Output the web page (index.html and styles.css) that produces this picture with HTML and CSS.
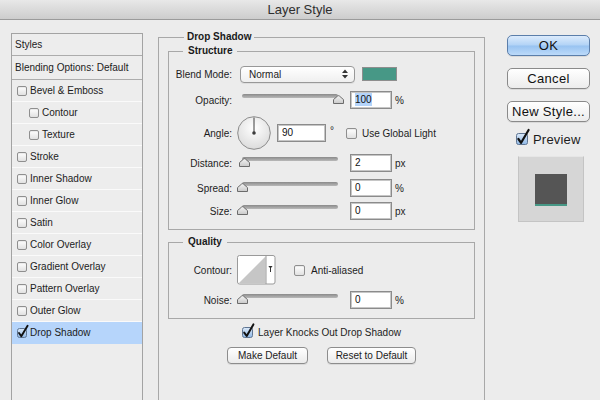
FILE: index.html
```html
<!DOCTYPE html>
<html>
<head>
<meta charset="utf-8">
<title>Layer Style</title>
<link rel="stylesheet" href="styles.css">
</head>
<body>
<svg class="defs" width="0" height="0" aria-hidden="true">
  <defs>
    <linearGradient id="gThumb" x1="0" y1="0" x2="0" y2="1">
      <stop offset="0" stop-color="#f4f4f4"/>
      <stop offset="1" stop-color="#c9c9c9"/>
    </linearGradient>
    <linearGradient id="gCheck" x1="0" y1="0" x2="0" y2="1">
      <stop offset="0" stop-color="#dbe9f8"/>
      <stop offset="1" stop-color="#8fb8e6"/>
    </linearGradient>
    <radialGradient id="gDial" cx="0.5" cy="0.35" r="0.7">
      <stop offset="0" stop-color="#ffffff"/>
      <stop offset="1" stop-color="#d9d9d9"/>
    </radialGradient>
  </defs>
</svg>

<div class="titlebar">Layer Style</div>

<div class="body">
  <div class="sidebar">
    <div class="sb-row sb-head sb-styles">Styles</div>
    <div class="sb-row sb-head sb-blend">Blending Options: Default</div>
    <div class="sb-row"><span class="cb"></span>Bevel &amp; Emboss</div>
    <div class="sb-row sb-sub"><span class="cb"></span>Contour</div>
    <div class="sb-row sb-sub"><span class="cb"></span>Texture</div>
    <div class="sb-row"><span class="cb"></span>Stroke</div>
    <div class="sb-row"><span class="cb"></span>Inner Shadow</div>
    <div class="sb-row"><span class="cb"></span>Inner Glow</div>
    <div class="sb-row"><span class="cb"></span>Satin</div>
    <div class="sb-row"><span class="cb"></span>Color Overlay</div>
    <div class="sb-row"><span class="cb"></span>Gradient Overlay</div>
    <div class="sb-row"><span class="cb"></span>Pattern Overlay</div>
    <div class="sb-row"><span class="cb"></span>Outer Glow</div>
    <div class="sb-row sb-selected">
      <svg class="cbx" width="10" height="10" viewBox="0 0 10 10" overflow="visible"><rect x="0.5" y="0.5" width="9" height="9" rx="2" fill="url(#gCheck)" stroke="#5f7592"/><path d="M2 5 L4.3 8.3 L10.6 -2.2" fill="none" stroke="#111" stroke-width="1.9" stroke-linecap="round" stroke-linejoin="round"/></svg>Drop Shadow
    </div>
  </div>

  <div class="main">
    <fieldset class="group outer">
      <legend class="lg-outer">Drop Shadow</legend>

      <fieldset class="group inner structure">
        <legend class="lg-inner">Structure</legend>

        <div class="row r-blend">
          <span class="lbl">Blend Mode:</span>
          <div class="select"><span>Normal</span>
            <svg class="updown" width="6" height="10" viewBox="0 0 6 10"><path d="M0 4 L3 0.5 L6 4 Z M0 6 L3 9.5 L6 6 Z" fill="#333"/></svg>
          </div>
          <span class="swatch"></span>
        </div>

        <div class="row r-opacity">
          <span class="lbl">Opacity:</span>
          <div class="slider"><span class="track"></span>
            <svg class="thumb" style="left:96px" width="11" height="9" viewBox="0 0 11 9"><path d="M0.5 8.5 V4.6 L4.6 1 Q5.5 0.3 6.4 1 L10.5 4.6 V8.5 Z" fill="url(#gThumb)" stroke="#6b6b6b"/></svg>
          </div>
          <div class="field"><span class="sel">100</span></div>
          <span class="unit">%</span>
        </div>

        <div class="row r-angle">
          <span class="lbl">Angle:</span>
          <svg class="dial" width="34" height="34" viewBox="0 0 34 34"><circle cx="17" cy="17" r="16.3" fill="url(#gDial)" stroke="#8c8c8c"/><line x1="17" y1="17" x2="17" y2="1.5" stroke="#3c3c3c" stroke-width="1"/><circle cx="17" cy="17" r="1.8" fill="#3c3c3c"/></svg>
          <div class="field f-angle">90</div>
          <span class="deg">°</span>
          <span class="cb cb-lg cb-global"></span>
          <span class="cb-text">Use Global Light</span>
        </div>

        <div class="row r-dist">
          <span class="lbl">Distance:</span>
          <div class="slider"><span class="track"></span>
            <svg class="thumb" style="left:2px" width="11" height="9" viewBox="0 0 11 9"><path d="M0.5 8.5 V4.6 L4.6 1 Q5.5 0.3 6.4 1 L10.5 4.6 V8.5 Z" fill="url(#gThumb)" stroke="#6b6b6b"/></svg>
          </div>
          <div class="field">2</div>
          <span class="unit">px</span>
        </div>

        <div class="row r-spread">
          <span class="lbl">Spread:</span>
          <div class="slider"><span class="track"></span>
            <svg class="thumb" style="left:0px" width="11" height="9" viewBox="0 0 11 9"><path d="M0.5 8.5 V4.6 L4.6 1 Q5.5 0.3 6.4 1 L10.5 4.6 V8.5 Z" fill="url(#gThumb)" stroke="#6b6b6b"/></svg>
          </div>
          <div class="field">0</div>
          <span class="unit">%</span>
        </div>

        <div class="row r-size">
          <span class="lbl">Size:</span>
          <div class="slider"><span class="track"></span>
            <svg class="thumb" style="left:0px" width="11" height="9" viewBox="0 0 11 9"><path d="M0.5 8.5 V4.6 L4.6 1 Q5.5 0.3 6.4 1 L10.5 4.6 V8.5 Z" fill="url(#gThumb)" stroke="#6b6b6b"/></svg>
          </div>
          <div class="field">0</div>
          <span class="unit">px</span>
        </div>
      </fieldset>

      <fieldset class="group inner quality">
        <legend class="lg-inner">Quality</legend>

        <div class="row r-contour">
          <span class="lbl">Contour:</span>
          <svg class="contour" width="39" height="30" viewBox="0 0 39 30"><rect x="0.5" y="0.5" width="37.5" height="28.5" rx="2" fill="#ffffff" stroke="#9a9a9a"/><polygon points="1.5,28.5 28.5,1.5 28.5,28.5" fill="#c6c6c6"/><line x1="29" y1="0.5" x2="29" y2="29" stroke="#9a9a9a"/><path d="M31.3 11 H35.6 L34 13 V17 H33 V13 Z" fill="#333"/></svg>
          <span class="cb cb-lg cb-anti"></span>
          <span class="cb-text">Anti-aliased</span>
        </div>

        <div class="row r-noise">
          <span class="lbl">Noise:</span>
          <div class="slider"><span class="track"></span>
            <svg class="thumb" style="left:0px" width="11" height="9" viewBox="0 0 11 9"><path d="M0.5 8.5 V4.6 L4.6 1 Q5.5 0.3 6.4 1 L10.5 4.6 V8.5 Z" fill="url(#gThumb)" stroke="#6b6b6b"/></svg>
          </div>
          <div class="field">0</div>
          <span class="unit">%</span>
        </div>
      </fieldset>

      <div class="knock">
        <svg class="cbx" width="11" height="11" viewBox="0 0 11 11" overflow="visible"><rect x="0.5" y="0.5" width="10" height="10" rx="2" fill="url(#gCheck)" stroke="#5f7592"/><path d="M2.2 5.6 L4.7 9 L11.4 -2.6" fill="none" stroke="#111" stroke-width="2" stroke-linecap="round" stroke-linejoin="round"/></svg>
        <span class="cb-text">Layer Knocks Out Drop Shadow</span>
      </div>

      <div class="btnrow">
        <span class="btn btn-make">Make Default</span>
        <span class="btn btn-reset">Reset to Default</span>
      </div>
    </fieldset>
  </div>

  <div class="rightcol">
    <div class="rbtn rbtn-ok">OK</div>
    <div class="rbtn">Cancel</div>
    <div class="rbtn rbtn-new">New Style...</div>
    <div class="preview-check">
      <svg class="cbx" width="12" height="12" viewBox="0 0 12 12" overflow="visible"><rect x="0.5" y="0.5" width="11" height="11" rx="2" fill="url(#gCheck)" stroke="#5f7592"/><path d="M2.4 6 L5.1 9.8 L12.6 -3" fill="none" stroke="#111" stroke-width="2.2" stroke-linecap="round" stroke-linejoin="round"/></svg>
      <span class="preview-text">Preview</span>
    </div>
    <div class="preview-box">
      <div class="preview-square"></div>
    </div>
  </div>
</div>
</body>
</html>
```

FILE: styles.css
```css
* { box-sizing: border-box; }

html, body {
  margin: 0;
  padding: 0;
}

body {
  width: 600px;
  height: 400px;
  overflow: hidden;
  background: #ececec;
  font-family: "Liberation Sans", Arial, sans-serif;
  font-size: 10px;
  color: #1c1c1c;
}

.defs {
  position: absolute;
  width: 0;
  height: 0;
}

/* Title bar */
.titlebar {
  height: 20px;
  background: linear-gradient(#e8e8e8, #cdcdcd);
  border-bottom: 1px solid #9b9b9b;
  text-align: center;
  font-size: 13px;
  line-height: 19px;
  color: #2e2e2e;
}

.body {
  display: flex;
  align-items: flex-start;
  height: 380px;
  padding: 11px 0 0 11px;
  overflow: hidden;
}

/* Sidebar */
.sidebar {
  flex-shrink: 0;
  width: 132px;
  height: 367px;
  margin-top: 2px;
  border: 1px solid #a3a3a3;
  border-bottom: none;
  background: #ededed;
}

.sb-row {
  display: flex;
  align-items: center;
  height: 22px;
  padding-left: 5px;
  border-bottom: 1px solid #fafafa;
  white-space: nowrap;
}

.sb-head {
  padding-left: 3px;
  border-bottom-color: #acacac;
}

.sb-blend { height: 24px; }

.sb-sub { padding-left: 17px; }

.sb-selected {
  background: #b6d5fb;
  border-bottom-color: #b6d5fb;
}

.cb {
  flex-shrink: 0;
  display: inline-block;
  width: 10px;
  height: 10px;
  border: 1px solid #8f8f8f;
  border-radius: 2px;
  background: linear-gradient(#ffffff, #e1e1e1);
  box-shadow: inset 0 1px 1px rgba(0, 0, 0, 0.08);
}

.sb-row .cb, .sb-row .cbx { margin-right: 3px; }

.cbx { flex-shrink: 0; display: block; }

.cb-lg { width: 11px; height: 11px; }

/* Main column */
.main {
  flex-shrink: 0;
  margin-left: 15px;
}

.group {
  margin: 0;
  min-width: 0;
  border: 1px solid #a8a8a8;
}

.outer {
  width: 327px;
  height: 369px;
  padding: 2px 9px 0;
  border-bottom: none;
}

.inner {
  width: 307px;
  padding: 0 0 9px 0;
}

legend {
  font-weight: bold;
  line-height: 12px;
  font-size: 10px;
  color: #1a1a1a;
}

.lg-outer {
  margin-left: 16px;
  padding: 0 3px;
}

.lg-inner {
  margin-left: 14px;
  padding: 0 5px;
}

.quality { margin-top: 6px; }

.row {
  display: flex;
  align-items: center;
  height: 18px;
  white-space: nowrap;
}

.lbl {
  flex-shrink: 0;
  width: 63px;
  margin-right: 5px;
  text-align: right;
}

.r-blend { margin-top: 8px; }
.r-opacity { margin-top: 8px; }
.r-angle { height: 34px; margin-top: 7px; }
.r-dist { margin-top: 4px; }
.r-spread { margin-top: 7px; }
.r-size { margin-top: 5px; }
.r-contour { height: 30px; margin-top: 7px; }
.r-noise { margin-top: 6px; }

.select {
  display: flex;
  align-items: center;
  justify-content: space-between;
  width: 115px;
  height: 17px;
  margin-left: 3px;
  padding: 0 6px 0 8px;
  border: 1px solid #989898;
  border-radius: 4px;
  background: linear-gradient(#ffffff, #efefef);
  box-shadow: 0 1px 0 rgba(0, 0, 0, 0.06);
}

.updown { display: block; }

.swatch {
  width: 35px;
  height: 14px;
  margin-left: 7px;
  border: 1px solid #8e8e8e;
  background: #479886;
}

.slider {
  position: relative;
  flex-shrink: 0;
  width: 107px;
  height: 18px;
}

.track {
  position: absolute;
  left: 5px;
  top: 3px;
  width: 96px;
  height: 4px;
  border-radius: 2px;
  background: linear-gradient(#8a8a8a, #b9b9b9);
}

.thumb {
  position: absolute;
  top: 4px;
  display: block;
}

.field {
  flex-shrink: 0;
  width: 42px;
  height: 18px;
  margin-left: 6px;
  padding-left: 4px;
  line-height: 16px;
  border: 1px solid #8b8b8b;
  background: #fff;
  box-shadow: inset 0 0 0 1px #c6c6c6;
  color: #111;
}

.sel {
  background: #b4d4fa;
  padding: 1px 0;
}

.unit { margin-left: 3px; }

.dial { display: block; flex-shrink: 0; }

.f-angle {
  width: 49px;
  margin-left: 6px;
}

.deg {
  margin-left: 4px;
  margin-top: -5px;
}

.cb-global { margin-left: 12px; }

.cb-text { margin-left: 5px; }

.contour { display: block; flex-shrink: 0; }

.cb-anti { margin-left: 18px; }

.r-contour .cb-text { margin-left: 6px; }

.knock {
  display: flex;
  align-items: center;
  justify-content: center;
  height: 14px;
  margin-top: 6px;
}

.btnrow {
  display: flex;
  justify-content: center;
  gap: 19px;
  margin-top: 8px;
}

.btn {
  display: block;
  height: 17px;
  line-height: 15px;
  text-align: center;
  border: 1px solid #8d8d8d;
  border-radius: 4px;
  background: linear-gradient(#ffffff, #ebebeb);
  box-shadow: 0 1px 0 rgba(0, 0, 0, 0.08);
}

.btn-make { width: 81px; }
.btn-reset { width: 89px; }

/* Right column */
.rightcol {
  flex-shrink: 0;
  width: 83px;
  margin-left: 22px;
  margin-top: 4px;
}

.rbtn {
  height: 21px;
  margin-bottom: 12px;
  line-height: 19px;
  text-align: center;
  font-size: 13px;
  letter-spacing: 0.3px;
  border: 1px solid #8a8a8a;
  border-radius: 5px;
  background: linear-gradient(#ffffff, #ececec);
  box-shadow: 0 1px 0 rgba(0, 0, 0, 0.08);
  color: #111;
}

.rbtn-ok {
  border-color: #5b7eaa;
  background: linear-gradient(#dcebfc 0%, #b2d3f6 48%, #98c3f1 52%, #bcdaf9 100%);
}

.rbtn-new { margin-bottom: 10px; }

.preview-check {
  display: flex;
  align-items: center;
  height: 14px;
  margin-left: 9px;
}

.preview-text {
  margin-left: 5px;
  font-size: 13px;
  letter-spacing: 0.2px;
}

.preview-box {
  width: 66px;
  height: 66px;
  margin-top: 10px;
  margin-left: 11px;
  padding-top: 17px;
  border: 1px solid #c4c4c4;
  border-top-color: #e6e6e6;
  background: #d6d6d6;
}

.preview-square {
  width: 32px;
  height: 32px;
  margin: 0 auto;
  background: #555555;
  border-bottom: 2px solid #479886;
}
```
